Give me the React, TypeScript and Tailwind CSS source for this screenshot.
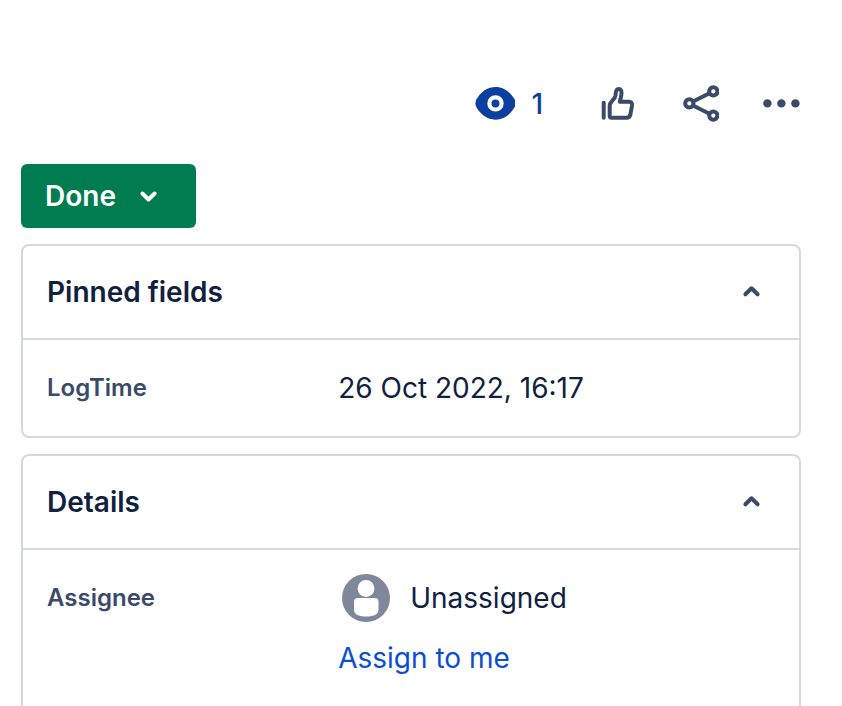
import type { ReactNode } from 'react'

const Chevron = ({ up = false }: { up?: boolean }) => (
  <svg className="size-12" viewBox="0 0 48 48" fill="none" stroke="currentColor" strokeWidth="4" strokeLinecap="round" strokeLinejoin="round" aria-hidden="true">
    <path d={up ? 'M18.4 26.3L24.5 20.3L30.6 26.3' : 'M18.4 21.5L24.5 27.5L30.6 21.5'} />
  </svg>
)

const WatchIcon = () => (
  <svg className="size-10" viewBox="0 1 40 40" aria-hidden="true">
    <path fill="currentColor" d="M20.5 4C11.8 4 5.6 9.3 1.3 16.6Q-.4 20.4 1.3 24.1C5.6 31.4 11.800 36.7 20.5 36.7C29.2 36.7 35.4 31.4 39.700 24.1Q41.4 20.4 39.700 16.6C35.4 9.3 29.2 4 20.5 4Z" />
    <circle cx="20.5" cy="20.4" r="6.1" fill="none" stroke="#fff" strokeWidth="4.2" />
  </svg>
)

const LikeIcon = () => (
  <svg className="size-10" viewBox="0 1 40 40" fill="none" stroke="currentColor" strokeWidth="4" strokeLinejoin="round" aria-hidden="true">
    <path strokeLinecap="round" d="M6.7 19.7V34.7" />
    <path d="M12.7 33V22.5C12.7 18.500 17.800 17 18.5 12.500C18.800 9.500 18.500 6 21.500 6C24.700 6 24.900 9 24.200 13L22.800 18.700H32Q35.500 18.700 35 22.500L33.400 31.500Q32.700 34.7 29.7 34.7H14.5Q12.7 34.7 12.7 33Z" />
  </svg>
)

const ShareIcon = () => (
  <svg className="size-10" viewBox="0 1 40 40" fill="none" stroke="currentColor" strokeWidth="4" aria-hidden="true">
    <path d="M14 18.5L31 10M14 22.5L31 31" />
    <circle cx="10.3" cy="20.4" r="4.1" fill="#fff" />
    <circle cx="34.3" cy="8.4" r="4.1" fill="#fff" />
    <circle cx="34.3" cy="32.6" r="4.1" fill="#fff" />
  </svg>
)

const MoreIcon = () => (
  <svg className="size-10" viewBox="0 1 40 40" fill="currentColor" aria-hidden="true">
    <circle cx="6.4" cy="20.4" r="4.2" />
    <circle cx="20.4" cy="20.4" r="4.2" />
    <circle cx="34.4" cy="20.4" r="4.2" />
  </svg>
)

const Avatar = () => (
  <svg className="size-12" viewBox="0 0 48 48" aria-hidden="true">
    <circle cx="24" cy="24" r="24" fill="#7f889b" />
    <circle cx="24" cy="14.5" r="8.4" fill="#fff" />
    <path fill="#fff" d="M12 28Q12 24 16 24H32.5Q36.5 24 36.5 28V36C36.5 41 30 42.5 24.2 42.5C18.5 42.5 12 41 12 36Z" />
  </svg>
)

const Panel = ({ title, children }: { title: string; children: ReactNode }) => (
  <section className="mt-4 rounded-lg border-2 border-[#d5d8df]">
    <h2>
      <button type="button" aria-expanded="true" className="flex h-[92px] w-full items-center justify-between px-6 text-[28px] font-semibold text-[#10213f]">
        {title}
        <span className="text-[#3a4a69]"><Chevron up /></span>
      </button>
    </h2>
    <dl className="space-y-6 border-t-2 border-[#d5d8df] p-6">{children}</dl>
  </section>
)

const Field = ({ label, children }: { label: string; children: ReactNode }) => (
  <div className="grid grid-cols-[2fr_3fr]">
    <dt className="text-2xl leading-12 font-semibold text-[#3a4a69]">{label}</dt>
    <dd className="text-[28px] leading-12 text-[#10213f]">{children}</dd>
  </div>
)

export default function App() {
  return (
    <main className="h-screen overflow-hidden bg-white pt-[84px] pr-[41px] pl-[21px] font-['Inter',sans-serif]">
      <div className="flex items-center justify-end gap-[42px] text-[#3a4a69]">
        <button type="button" aria-label="Watchers" className="flex items-center gap-4 pr-3 text-[28px] leading-10 font-medium text-[#0b3fa0]">
          <WatchIcon />
          1
        </button>
        <button type="button" aria-label="Like"><LikeIcon /></button>
        <button type="button" aria-label="Share"><ShareIcon /></button>
        <button type="button" aria-label="More actions"><MoreIcon /></button>
      </div>

      <button type="button" className="mt-10 flex h-16 items-center gap-2 rounded-md bg-[#007d50] px-6 text-[28px] font-semibold text-white">
        Done
        <Chevron />
      </button>

      <Panel title="Pinned fields">
        <Field label="LogTime">26 Oct 2022, 16:17</Field>
      </Panel>

      <Panel title="Details">
        <Field label="Assignee">
          <div className="flex items-center gap-5 pl-1">
            <Avatar />
            Unassigned
          </div>
          <a href="#assign" className="mt-3 mb-6 block text-[#0b4fd0]">Assign to me</a>
        </Field>
      </Panel>
    </main>
  )
}
